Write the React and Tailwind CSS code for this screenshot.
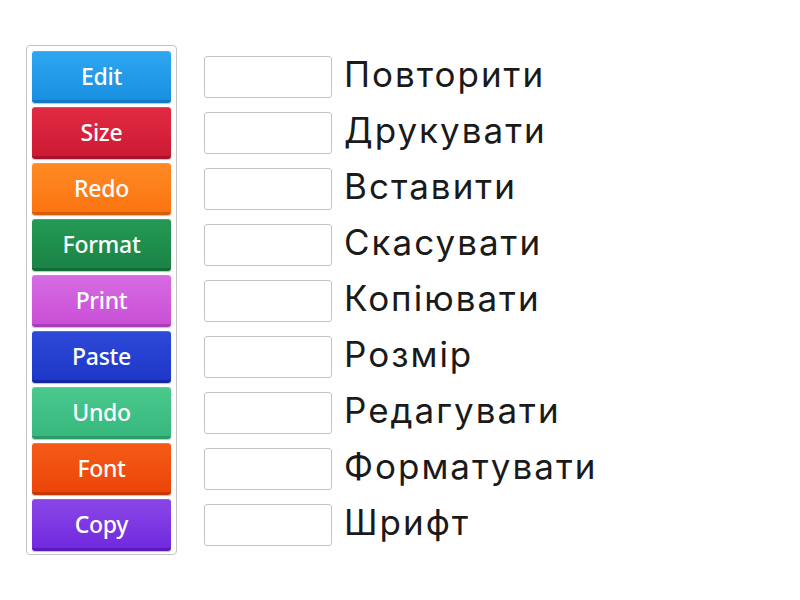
import React from 'react';

const buttons = [
  { label: 'Edit', cls: 'from-[#2ea6f0] to-[#1890e0] border-b-[#1479c4]' },
  { label: 'Size', cls: 'from-[#e12a42] to-[#cc1a33] border-b-[#a8122a]' },
  { label: 'Redo', cls: 'from-[#ff8a24] to-[#fb7410] border-b-[#d95e08]' },
  { label: 'Format', cls: 'from-[#249a55] to-[#1b8345] border-b-[#136b36]' },
  { label: 'Print', cls: 'from-[#d66be2] to-[#c94fd6] border-b-[#a93cb8]' },
  { label: 'Paste', cls: 'from-[#2e48d8] to-[#1d37c8] border-b-[#1428a4]' },
  { label: 'Undo', cls: 'from-[#4ac98e] to-[#38b87e] border-b-[#2a9a66]' },
  { label: 'Font', cls: 'from-[#f45a16] to-[#ec450a] border-b-[#c83806]' },
  { label: 'Copy', cls: 'from-[#8a45e8] to-[#7129de] border-b-[#5a1bbd]' },
];

const words = [
  'Повторити',
  'Друкувати',
  'Вставити',
  'Скасувати',
  'Копіювати',
  'Розмір',
  'Редагувати',
  'Форматувати',
  'Шрифт',
];

export default function App() {
  return (
    <div className="w-[800px] h-[600px] bg-white flex items-start pl-[26px] pt-[45px]">
      <div className="w-[151px] border border-[#c4c4c4] rounded-[4px] pt-[5px] pb-[3px] px-[5px] flex flex-col gap-[4px]">
        {buttons.map((b) => (
          <div
            key={b.label}
            className={`h-[52px] rounded-[3px] bg-gradient-to-b border-b-[3px] border-t border-t-white/25 flex items-center justify-center text-white text-[23px] font-medium tracking-[-0.3px] shadow-[0_1px_1px_rgba(0,0,0,0.25)] ${b.cls}`}
            style={{ fontFamily: '"Noto Sans", sans-serif' }}
          >
            {b.label}
          </div>
        ))}
      </div>
      <div className="ml-[27px] pt-[6px] flex flex-col gap-[4px]">
        {words.map((w) => (
          <div key={w} className="h-[52px] flex items-center">
            <div className="w-[128px] h-[42px] border border-[#c4c4c4] rounded-[3px] bg-white" />
            <span
              className="ml-[12px] text-[35px] tracking-[2px] text-[#1a1a1a] leading-none -mt-[6px]"
              style={{ fontFamily: 'Inter, "Noto Sans", sans-serif' }}
            >
              {w}
            </span>
          </div>
        ))}
      </div>
    </div>
  );
}
